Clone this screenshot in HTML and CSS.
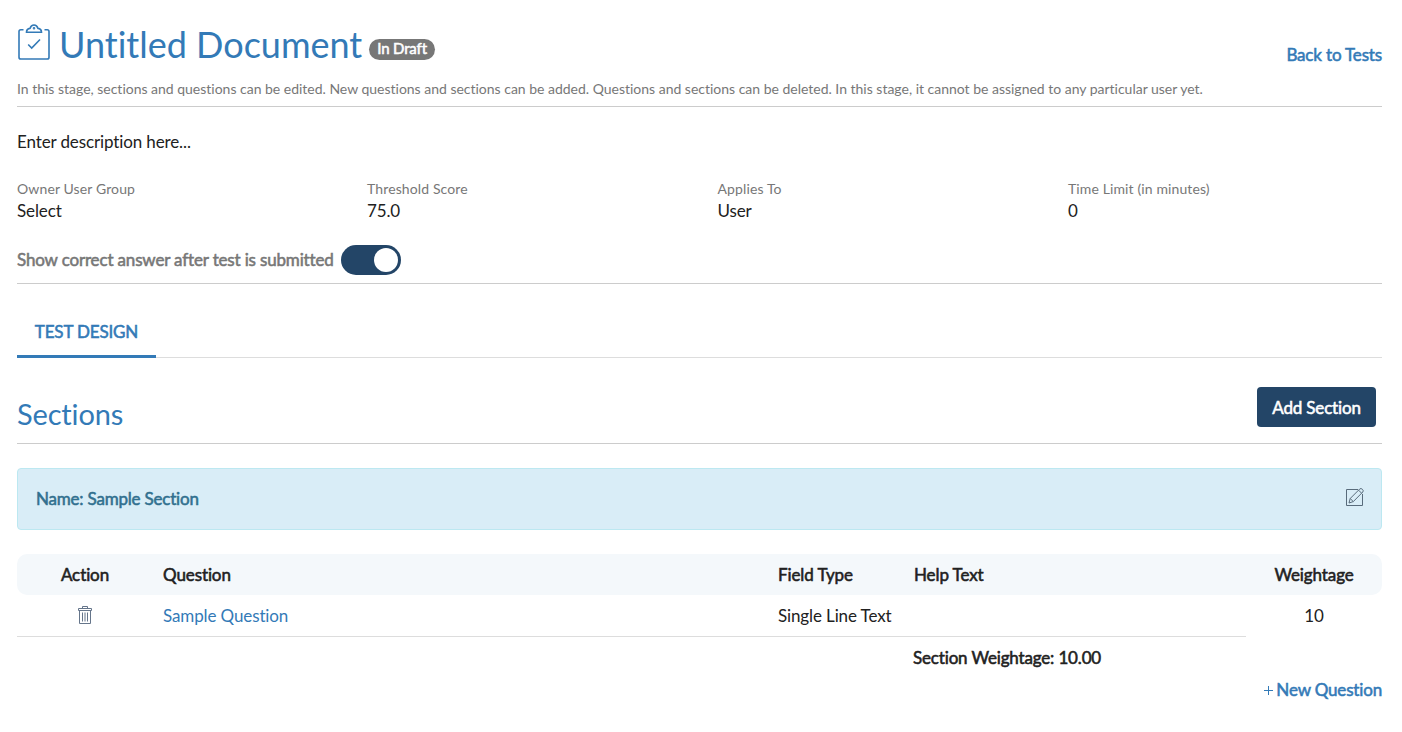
FILE: index.html
```
<!DOCTYPE html>
<html lang="en">
<head>
<meta charset="utf-8">
<title>Untitled Document</title>
<link rel="stylesheet" href="styles.css">
</head>
<body>
<main class="page">
  <header class="header">
    <div class="title-row">
      <svg class="clipboard" width="34" height="38" viewBox="0 0 34 38" fill="none" stroke="currentColor" stroke-width="1.6">
        <path d="M6.5 5.8H3.8Q2 5.8 2 7.6V33.2Q2 35 3.8 35H30.2Q32 35 32 33.2V7.6Q32 5.8 30.2 5.8H27.5"/>
        <path d="M9.5 8.2Q9.5 5 13 4.4Q14 1 17 1Q20 1 21 4.4Q24.500 5 24.500 8.200Z"/>
        <path d="M11.200 20.500L14.700 24L23 15.500"/>
        <circle cx="17" cy="4.300" r=".5"/>
      </svg>
      <h1 class="title">Untitled Document</h1>
      <span class="badge strong">In Draft</span>
      <a class="back strong">Back to Tests</a>
    </div>
    <p class="stage">In this stage, sections and questions can be edited. New questions and sections can be added. Questions and sections can be deleted. In this stage, it cannot be assigned to any particular user yet.</p>
  </header>
  <p class="description">Enter description here...</p>
  <dl class="fields">
    <div><dt>Owner User Group</dt><dd>Select</dd></div>
    <div><dt>Threshold Score</dt><dd>75.0</dd></div>
    <div><dt>Applies To</dt><dd>User</dd></div>
    <div><dt>Time Limit (in minutes)</dt><dd>0</dd></div>
  </dl>
  <div class="answer-row">
    <span class="answer-label strong">Show correct answer after test is submitted</span>
    <span class="toggle"><span class="knob"></span></span>
  </div>
  <nav class="tabs"><a class="tab strong">TEST DESIGN</a></nav>
  <div class="sections-head">
    <h2 class="sections-title">Sections</h2>
    <button class="add strong">Add Section</button>
  </div>
  <div class="section-bar">
    <span class="section-name strong">Name: Sample Section</span>
    <svg class="edit" width="20" height="20" viewBox="0 0 20 20" fill="none" stroke="currentColor">
      <path d="M13 2.500H1.500V18.500H17.500V7"/>
      <path d="M4 16L5.200 11.500L14.800 1.900Q16 1 17.400 2.300Q18.900 3.700 17.800 5L8.300 14.600ZM13.600 3.200L16.600 6.200M5.200 11.500L8.300 14.600"/>
    </svg>
  </div>
  <div class="row row-head strong">
    <span class="center">Action</span><span>Question</span><span>Field Type</span><span>Help Text</span><span class="center">Weightage</span>
  </div>
  <div class="row row-body">
    <span class="center"><svg class="trash" width="14" height="18" viewBox="0 0 14 18" fill="none" stroke="currentColor">
      <path d="M.5 4.500V2.500H13.500V4.500ZM4.500 2.500V.5H9.500V2.500M1.500 4.500V17.500H12.500V4.500M4.500 6.500V15.500M7 6.500V15.500M9.500 6.500V15.500"/>
    </svg></span><span class="link">Sample Question</span><span>Single Line Text</span><span></span><span class="center">10</span>
  </div>
  <div class="row row-total strong"><span class="total">Section Weightage: 10.00</span></div>
  <div class="new-row">
    <svg width="9" height="9" viewBox="0 0 9 9" stroke="currentColor"><path d="M0 4.500H9M4.500 0V9"/></svg>
    <a class="strong">New Question</a>
  </div>
</main>
</body>
</html>
```
FILE: styles.css
```
* { box-sizing: border-box; }
body { margin: 0; background: #fff; color: #212121; font: 400 17px/24px Lato, sans-serif; font-variant-ligatures: none; letter-spacing: -.12px; }
h1, h2, p, dl, dd { margin: 0; font-weight: 400; }
.strong { font-weight: 400; -webkit-text-stroke: .55px currentColor; letter-spacing: -.16px; }
.page { width: 1365px; margin-left: 17px; }
.header { height: 107px; border-bottom: 1px solid #ccc; }
.title-row { display: flex; height: 78px; padding-top: 23px; color: #337ab7; }
.clipboard { margin: 1px 8px 0 0; }
.title { margin-top: -1px; font-size: 36px; line-height: 44px; white-space: nowrap; letter-spacing: 0; }
.badge { height: 21px; margin: 16px 0 0 7px; padding: 0 8px; border-radius: 11px; background: #777; color: #fff; font-size: 15px; line-height: 19px; }
.back { margin: 20px 0 0 auto; }
.stage { color: #777; font-size: 14px; line-height: 22px; white-space: nowrap; letter-spacing: -.01px; }
.description { height: 72px; padding-top: 23px; }
.fields { display: grid; grid-template-columns: 350px 350.500px 350.500px 1fr; height: 64px; }
.fields dt { color: #777; font-size: 14px; line-height: 20px; letter-spacing: .12px; }
.fields dd { line-height: 24px; }
.answer-row { display: flex; align-items: flex-start; height: 41px; padding-top: 2px; border-bottom: 1px solid #ccc; }
.answer-label { width: 317px; margin-top: 3px; color: #777; white-space: nowrap; }
.toggle { display: flex; justify-content: flex-end; width: 60px; height: 30px; margin-left: 7px; padding: 3px; border-radius: 15px; background: #234567; }
.knob { width: 24px; height: 24px; border-radius: 50%; background: #fff; }
.tabs { display: flex; align-items: flex-end; height: 74px; border-bottom: 1px solid #ddd; }
.tab { width: 139px; height: 40px; margin-bottom: -1px; padding-top: 2px; border-bottom: 3px solid #337ab7; color: #337ab7; text-align: center; }
.sections-head { display: flex; justify-content: space-between; height: 86px; padding: 29px 6px 0 0; border-bottom: 1px solid #ccc; }
.sections-title { margin-top: 9px; color: #337ab7; font-size: 29px; line-height: 36px; letter-spacing: -.15px; }
.add { width: 119px; height: 40px; padding: 1px 0 0; border: 0; border-radius: 4px; background: #234567; color: #fff; font: 400 17px Lato, sans-serif; font-variant-ligatures: none; }
.section-bar { display: flex; justify-content: space-between; align-items: center; height: 62px; margin: 24px 0; padding: 0 16px 0 18px; border: 1px solid #bce8f1; border-radius: 4px; background: #d9edf7; color: #31708f; }
.section-name { letter-spacing: -.2px; }
.edit { margin-bottom: 4px; color: #586b7b; stroke-width: 1; }
.row { display: grid; grid-template-columns: 136px 615px 136px 342px 136px; align-items: center; }
.row > span:not(.center) { padding-left: 10px; }
.center { text-align: center; }
.row-head { height: 41px; border-radius: 10px; background: #f4f8fb; letter-spacing: -.1px; }
.row-body { height: 42px; background: linear-gradient(#ddd, #ddd) 0 100% / 1229px 1px no-repeat; }
.trash { display: block; margin: -2px auto 0; color: #65758a; }
.link { color: #337ab7; }
.row-total { height: 42px; }
.row > span.total:not(.center) { grid-column: 4; padding-left: 9px; }
.new-row { display: flex; justify-content: flex-end; align-items: center; gap: 3px; height: 22px; color: #337ab7; }
```
